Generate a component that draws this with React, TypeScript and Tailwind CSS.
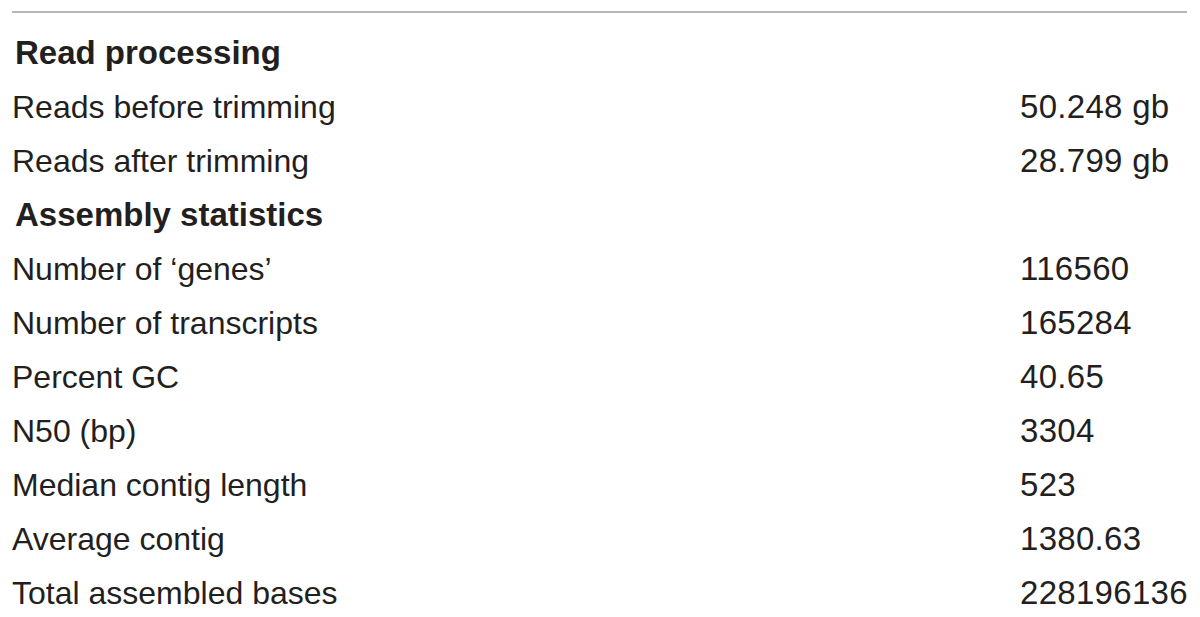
type Row = { label: string; value?: string; heading?: boolean };

const rows: Row[] = [
  { label: "Read processing", heading: true },
  { label: "Reads before trimming", value: "50.248 gb" },
  { label: "Reads after trimming", value: "28.799 gb" },
  { label: "Assembly statistics", heading: true },
  { label: "Number of \u2018genes\u2019", value: "116560" },
  { label: "Number of transcripts", value: "165284" },
  { label: "Percent GC", value: "40.65" },
  { label: "N50 (bp)", value: "3304" },
  { label: "Median contig length", value: "523" },
  { label: "Average contig", value: "1380.63" },
  { label: "Total assembled bases", value: "228196136" },
];

export default function App() {
  return (
    <div className="w-[1200px] h-[617px] overflow-hidden bg-white px-[12px] pt-[11px] font-['Liberation_Sans',Arial,sans-serif] text-[#231f20]">
      <div className="w-[1175px] border-t-2 border-[#b8b8b8]" />
      <div className="mt-[13px]">
        {rows.map((r) => (
          <div key={r.label} className="flex h-[54px] items-center leading-[54px]">
            {r.heading ? (
              <span className="pl-[3px] text-[33px] font-bold">{r.label}</span>
            ) : (
              <>
                <span className="w-[1008px] text-[32px]">{r.label}</span>
                <span className="text-[33px] tracking-[0.3px]">{r.value}</span>
              </>
            )}
          </div>
        ))}
      </div>
    </div>
  );
}
